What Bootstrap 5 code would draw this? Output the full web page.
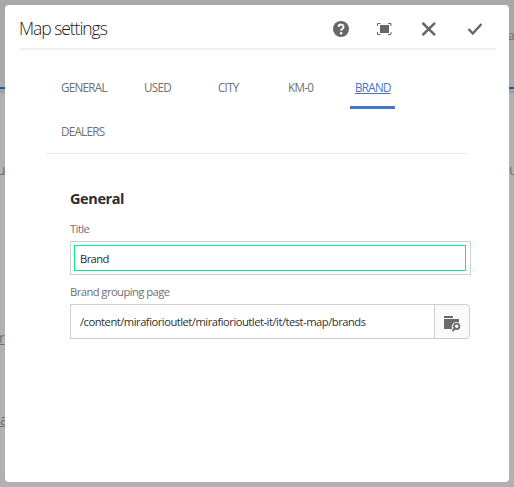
<!DOCTYPE html>
<html lang="en">
<head>
<meta charset="utf-8">
<meta name="viewport" content="width=device-width, initial-scale=1">
<title>Map settings</title>
<link href="https://cdn.jsdelivr.net/npm/bootstrap@5.3.0/dist/css/bootstrap.min.css" rel="stylesheet">
<style>
body{height:487px;overflow:hidden;background:#b1b1b1;font-family:"Open Sans","Noto Sans",sans-serif;font-size:11.3px;line-height:16px;color:#323232}
.page-top{height:94px;background:linear-gradient(#a9a9a9 87px,#1c5c9c 87px,#1c5c9c 89px,#adadad 89px,#9c9c9c 91px,#a3a3a3 93px,#b1b1b1 94px)}
.page-text{color:#707070;font-size:14px;line-height:16px}
.t1{left:508px;top:28px;font-size:12px;letter-spacing:-.8px}.t2{left:-3px;top:162px}.t3{left:509px;top:162px}.t4{left:-1px;top:330px}.t5{left:0;top:412px}
.dialog{left:5px;top:5px;width:504px;height:477px;border-radius:4px}
.dialog-head{height:45px;margin:0 13px 0 14px;border-bottom:2px solid #f0f0f0}
.dialog-title{padding-top:2px;font-weight:300;font-size:17.5px;line-height:24px;letter-spacing:-1.05px;color:#222}
.tool{width:16px;height:16px;color:#666;display:block}
.tools{gap:29px;padding:5px 13px 0 0}
.tool-fit{margin-left:-2px}
.tool-check{margin-left:1px}
.tabs{margin:20px 42px 0;padding:0 0 0 9px;height:84px;border-bottom:1px solid #e6e6e6;grid-template-columns:83px 74px 70px 67px 60px;grid-auto-rows:44px}
.tabs .nav-link{width:max-content;height:39px;padding:9px 5px 0;font-size:11.7px;line-height:16px;letter-spacing:-.75px;color:#707070}
.tabs .nav-link.active{color:#4475c9;text-decoration:underline;text-underline-offset:1px;border-bottom:3px solid #4475c9;width:45px}
.panel{margin:35px 38px 0 65px}
.panel h2{margin-bottom:12px;font-size:14.5px;font-weight:700;line-height:20px;letter-spacing:-.4px;color:#2c2c2c}
.field-label{display:block;margin-bottom:4px;color:#707070;letter-spacing:-.6px;line-height:16px}
.title-box{height:34px;margin-bottom:9px;padding:3px 4px 3px 3px;border:1px solid #cfcfcf}
.field-input{border:1px solid #00f286;border-radius:0;height:26px;padding:0 5px;font-size:11.2px;line-height:24px;color:#2c2c2c;letter-spacing:-.6px}
.path-group{width:400px;height:35px}
.path-group .form-control{height:35px;border:1px solid #cfcfcf;border-radius:0;padding:0 9px;font-size:11.2px;letter-spacing:-.49px;color:#323232}
.path-group .btn{width:36px;padding:0;border:1px solid #cfcfcf;border-radius:0 4px 4px 0;background:#fafafa;color:#6a6a6a}
.path-group svg{margin-top:4px}
</style>
</head>
<body>
<div class="page-top"></div>
<span class="page-text position-absolute t1">ar</span>
<span class="page-text position-absolute t2">u</span>
<span class="page-text position-absolute t3">u</span>
<u class="page-text position-absolute t4">r</u>
<u class="page-text position-absolute t5">a</u>

<main class="dialog bg-white position-absolute overflow-hidden">
  <header class="dialog-head d-flex align-items-center justify-content-between">
    <h1 class="dialog-title mb-0 text-nowrap">Map settings</h1>
    <div class="tools d-flex align-items-center">
      <svg class="tool" viewBox="0 0 16 16"><circle cx="8" cy="8" r="8" fill="currentColor"/><path d="M5.600 5.900C5.700 2.800 10.700 2.900 10.500 6c-.1 1.800-2.400 1.700-2.400 3.800" fill="none" stroke="#fff" stroke-width="2"/><circle cx="8.100" cy="12.200" r="1.250" fill="#fff"/></svg>
      <svg class="tool tool-fit" viewBox="0 0 16 16"><path d="M4 4h9v8H4z" fill="currentColor"/><path d="M1.500 5V2.500H4.500M12 2.500h3V5M15 11v2.500h-3M4.500 13.500h-3V11" fill="none" stroke="currentColor"/></svg>
      <svg class="tool" viewBox="0 0 16 16"><path d="M1.500 1.800L14 14.200M14 1.800L1.500 14.200" fill="none" stroke="currentColor" stroke-width="2.600"/></svg>
      <svg class="tool tool-check" viewBox="0 0 16 16"><path d="M1.500 8l4.300 4.600L14.500 3" fill="none" stroke="currentColor" stroke-width="2.400"/></svg>
    </div>
  </header>
  <nav class="tabs d-grid">
    <a class="nav-link">GENERAL</a>
    <a class="nav-link">USED</a>
    <a class="nav-link">CITY</a>
    <a class="nav-link">KM-0</a>
    <a class="nav-link active">BRAND</a>
    <a class="nav-link">DEALERS</a>
  </nav>
  <section class="panel">
    <h2>General</h2>
    <label class="field-label" for="title">Title</label>
    <div class="title-box"><input id="title" class="form-control field-input" value="Brand"></div>
    <label class="field-label" for="path">Brand grouping page</label>
    <div class="input-group path-group flex-nowrap">
      <input id="path" class="form-control" value="/content/mirafiorioutlet/mirafiorioutlet-it/it/test-map/brands">
      <button class="btn d-flex align-items-center justify-content-center" type="button" aria-label="Browse">
        <svg width="18" height="16" viewBox="0 0 18 16"><path d="M1 0h9v2H1zM1 3h15v10H1z" fill="currentColor"/><circle cx="13.500" cy="10.800" r="3" fill="#fafafa" stroke="#fafafa" stroke-width="3.500"/><circle cx="13.700" cy="10.300" r="2.700" fill="#fafafa" stroke="currentColor" stroke-width="1.800"/><path d="M11.800 12.500L9.500 15" stroke="currentColor" stroke-width="1.900"/></svg>
      </button>
    </div>
  </section>
</main>
<script src="https://cdn.jsdelivr.net/npm/bootstrap@5.3.0/dist/js/bootstrap.bundle.min.js"></script>
</body>
</html>
